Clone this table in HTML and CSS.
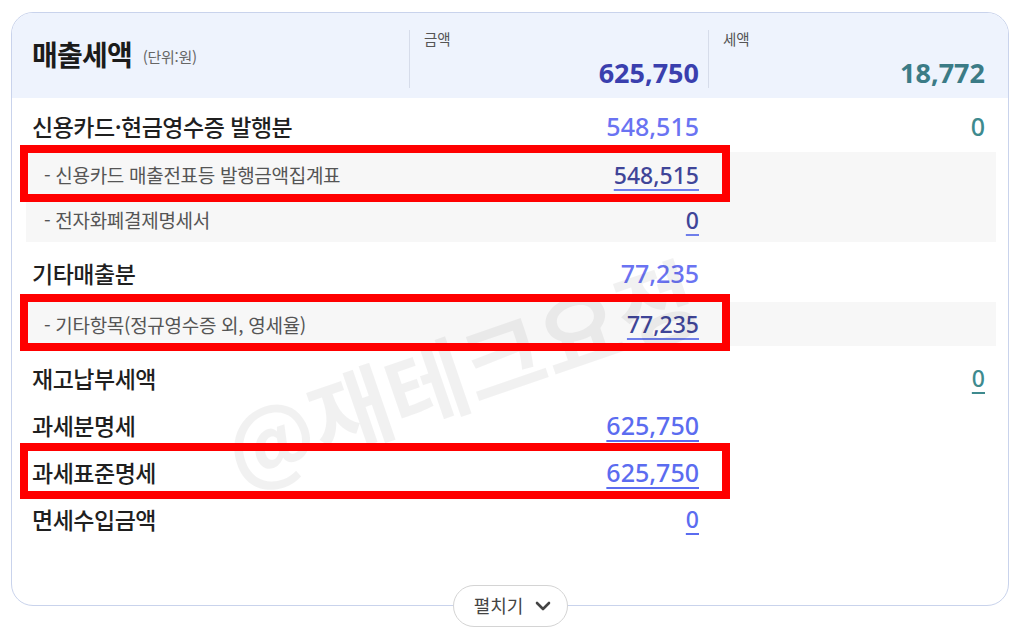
FILE: index.html
```html
<!DOCTYPE html>
<html lang="ko">
<head>
<meta charset="utf-8">
<title>매출세액</title>
<link rel="stylesheet" href="styles.css">
</head>
<body>
<div class="page">
  <section class="card">
    <header class="head">
      <div class="head-title">
        <h1>매출세액</h1>
        <span class="unit">(단위:원)</span>
      </div>
      <div class="head-col">
        <div class="head-lbl">금액</div>
        <div class="head-val amt-strong">625,750</div>
      </div>
      <div class="head-col">
        <div class="head-lbl">세액</div>
        <div class="head-val tax-strong">18,772</div>
      </div>
    </header>

    <div class="body">
      <div class="row main r-a">
        <div class="lbl">신용카드·현금영수증 발행분</div>
        <div class="amt"><span class="num blue">548,515</span></div>
        <div class="tax"><span class="num teal">0</span></div>
      </div>
      <div class="panel p-1">
        <div class="row sub">
          <div class="lbl">- 신용카드 매출전표등 발행금액집계표</div>
          <div class="amt"><span class="num small link-dark">548,515</span></div>
          <div class="tax"></div>
        </div>
        <div class="row sub">
          <div class="lbl">- 전자화폐결제명세서</div>
          <div class="amt"><span class="num small link-dark">0</span></div>
          <div class="tax"></div>
        </div>
      </div>
      <div class="row main r-b">
        <div class="lbl">기타매출분</div>
        <div class="amt"><span class="num blue">77,235</span></div>
        <div class="tax"></div>
      </div>
      <div class="panel p-2">
        <div class="row sub short">
          <div class="lbl">- 기타항목(정규영수증 외, 영세율)</div>
          <div class="amt"><span class="num small link-dark">77,235</span></div>
          <div class="tax"></div>
        </div>
      </div>
      <div class="row main r-c">
        <div class="lbl">재고납부세액</div>
        <div class="amt"></div>
        <div class="tax"><span class="num small teal link-teal">0</span></div>
      </div>
      <div class="row main">
        <div class="lbl">과세분명세</div>
        <div class="amt"><span class="num link-blue">625,750</span></div>
        <div class="tax"></div>
      </div>
      <div class="row main">
        <div class="lbl">과세표준명세</div>
        <div class="amt"><span class="num link-blue">625,750</span></div>
        <div class="tax"></div>
      </div>
      <div class="row main">
        <div class="lbl">면세수입금액</div>
        <div class="amt"><span class="num small link-blue">0</span></div>
        <div class="tax"></div>
      </div>
    </div>

    <button class="expand" type="button">펼치기
      <svg class="chev" width="16" height="10" viewBox="0 0 16 10"><path d="M2 2 L8 8 L14 2" fill="none" stroke="#444" stroke-width="2.6" stroke-linecap="round" stroke-linejoin="round"/></svg>
    </button>
  </section>

  <div class="watermark">@재테크요정</div>

  <div class="mark m-1"></div>
  <div class="mark m-2"></div>
  <div class="mark m-3"></div>
</div>
</body>
</html>
```

FILE: styles.css
```css
* { box-sizing: border-box; }
html, body { margin: 0; padding: 0; background: #ffffff; }
body {
  font-family: "Noto Sans", "Noto Sans CJK KR", sans-serif;
  color: #222;
}
.page {
  position: relative;
  width: 1024px;
  height: 636px;
  overflow: hidden;
  padding: 12px 0 0 11px;
}
.card {
  position: relative;
  width: 998px;
  height: 594px;
  border: 1.5px solid #c9d3ec;
  border-radius: 22px;
  background: #fff;
}
.head {
  display: grid;
  grid-template-columns: 397px 299px 1fr;
  height: 85px;
  background: #eef3fd;
  border-radius: 21px 21px 0 0;
}
.head-title {
  display: flex;
  align-items: center;
  gap: 11px;
  padding-left: 20px;
  padding-bottom: 4px;
}
.head-title h1 {
  margin: 0;
  font-family: "Noto Sans CJK KR", sans-serif;
  font-size: 28px;
  font-weight: 700;
  letter-spacing: -0.8px;
  color: #1b1b1b;
}
.unit {
  font-family: "Noto Sans CJK KR", sans-serif;
  font-size: 15px;
  color: #666;
  margin-top: 5px;
  letter-spacing: -0.3px;
}
.head-col {
  display: flex;
  flex-direction: column;
  justify-content: space-between;
  border-left: 1px solid #d6dcea;
  margin: 17px 0 10px;
  padding: 0 9px 0 14px;
}
.head-col:last-child { padding-right: 23px; }
.head-lbl {
  font-family: "Noto Sans CJK KR", sans-serif;
  font-size: 14.5px;
  color: #555;
  line-height: 18px;
}
.head-val {
  text-align: right;
  font-size: 27px;
  font-weight: 700;
  line-height: 30px;
}
.amt-strong { color: #3a3fae; }
.tax-strong { color: #3b7b86; }

.body { display: flex; flex-direction: column; }
.row {
  display: grid;
  grid-template-columns: 397px 299px 1fr;
  align-items: center;
}
.row .amt { text-align: right; padding-right: 9px; }
.row .tax { text-align: right; padding-right: 23px; }
.main { height: 47px; }
.main .lbl {
  padding-left: 20px;
  font-family: "Noto Sans CJK KR", sans-serif;
  font-size: 23px;
  font-weight: 500;
  letter-spacing: -0.5px;
  color: #1f1f1f;
}
.r-a { margin-top: 4px; }
.r-b { margin-top: 7px; }
.r-c { margin-top: 8px; }
.panel {
  margin: 3px 12px 0 14px;
  background: #f7f7f7;
}
.p-2 { margin-top: 6px; }
.panel .row { grid-template-columns: 383px 299px 1fr; }
.sub { height: 45px; }
.sub.short { height: 44px; }
.sub .lbl {
  padding-left: 18px;
  font-family: "Noto Sans CJK KR", sans-serif;
  font-size: 19px;
  color: #555;
  letter-spacing: -0.3px;
}
.num {
  font-size: 25px;
  font-weight: 500;
  line-height: 30px;
}
.num.small { font-size: 23px; }
.blue { color: #6a73f2; }
.teal { color: #3e8a8e; }
.link-dark {
  color: #3f4598;
  text-decoration: underline;
  text-decoration-color: #6f7eea;
  text-decoration-thickness: 2px;
  text-underline-offset: 5px;
}
.link-blue {
  color: #5b6cf0;
  text-decoration: underline;
  text-decoration-thickness: 2px;
  text-underline-offset: 5px;
}
.link-teal {
  text-decoration: underline;
  text-decoration-thickness: 2px;
  text-underline-offset: 5px;
}
.expand {
  position: absolute;
  left: 441px;
  bottom: -22px;
  width: 115px;
  height: 42px;
  border: 1.5px solid #d4d4d4;
  border-radius: 21px;
  background: #fff;
  display: flex;
  align-items: center;
  justify-content: center;
  gap: 12px;
  font-family: "Noto Sans CJK KR", sans-serif;
  font-size: 18px;
  color: #444;
  padding: 0 0 2px 4px;
}
.chev { margin-top: 2px; }
.watermark {
  position: absolute;
  left: 170px;
  top: 305px;
  width: 580px;
  text-align: center;
  font-family: "Noto Sans CJK KR", sans-serif;
  font-size: 88px;
  font-weight: 700;
  color: rgba(0, 0, 0, 0.055);
  transform: rotate(-19deg);
  transform-origin: center center;
  pointer-events: none;
  white-space: nowrap;
}
.mark {
  position: absolute;
  left: 20px;
  width: 710px;
  height: 57px;
  border: 8px solid #ff0000;
  pointer-events: none;
}
.m-1 { top: 145px; }
.m-2 { top: 294px; }
.m-3 { top: 443px; height: 56px; }
```
